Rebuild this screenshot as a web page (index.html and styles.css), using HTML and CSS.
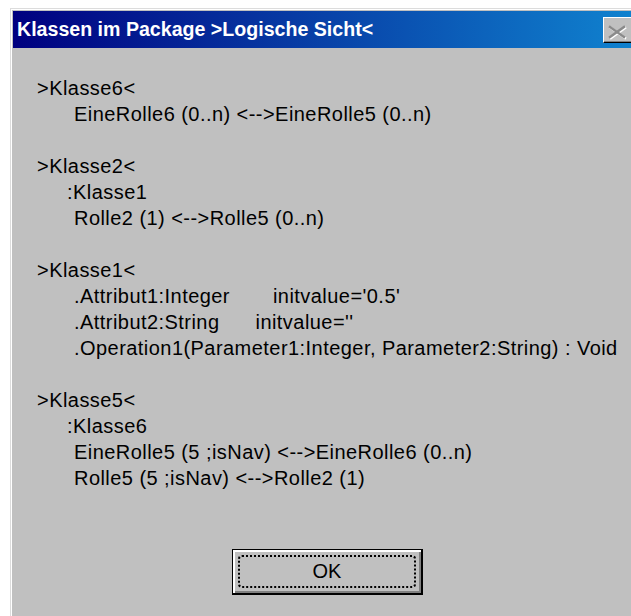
FILE: index.html
```html
<!DOCTYPE html>
<html lang="de">
<head>
<meta charset="utf-8">
<title>Klassen im Package</title>
<link rel="stylesheet" href="styles.css">
</head>
<body>
<div class="window">
  <div class="titlebar">
    <span class="title">Klassen im Package &gt;Logische Sicht&lt;</span>
    <span class="close" aria-label="Schließen">
      <svg width="30" height="24" viewBox="0 0 30 24">
        <g stroke-width="2.4" stroke-linecap="square">
          <path d="M6 9 L20 19 M20 9 L6 19" stroke="#ffffff" transform="translate(1 1)"/>
          <path d="M6 9 L20 19 M20 9 L6 19" stroke="#8a8a8a"/>
        </g>
      </svg>
    </span>
  </div>
  <div class="content">
    <div class="listing">
      <div class="block">
        <div class="line">&gt;Klasse6&lt;</div>
        <div class="line deep">EineRolle6 (0..n) &lt;--&gt;EineRolle5 (0..n)</div>
      </div>
      <div class="block">
        <div class="line">&gt;Klasse2&lt;</div>
        <div class="line shallow">:Klasse1</div>
        <div class="line deep">Rolle2 (1) &lt;--&gt;Rolle5 (0..n)</div>
      </div>
      <div class="block">
        <div class="line">&gt;Klasse1&lt;</div>
        <div class="line deep">.Attribut1:Integer<span class="init init-1">initvalue='0.5'</span></div>
        <div class="line deep">.Attribut2:String<span class="init init-2">initvalue=''</span></div>
        <div class="line deep">.Operation1(Parameter1:Integer, Parameter2:String) : Void</div>
      </div>
      <div class="block">
        <div class="line">&gt;Klasse5&lt;</div>
        <div class="line shallow">:Klasse6</div>
        <div class="line deep">EineRolle5 (5 ;isNav) &lt;--&gt;EineRolle6 (0..n)</div>
        <div class="line deep">Rolle5 (5 ;isNav) &lt;--&gt;Rolle2 (1)</div>
      </div>
    </div>
    <button class="ok" type="button"><span class="focus">OK</span></button>
  </div>
</div>
</body>
</html>
```
FILE: styles.css
```css
html, body {
  margin: 0;
  padding: 0;
}

body {
  width: 631px;
  height: 616px;
  overflow: hidden;
  background: #ffffff;
}

/* dialog frame, running on past the right and bottom edges */
.window {
  margin: 8px 0 0 10px;
  width: 629px;
  padding: 2px 2px 0 2px;
  border: 1px solid #dcdcdc;
  border-bottom: none;
  box-shadow: inset 1px 1px 0 #ffffff;
  background: #c0c0c0;
}

.titlebar {
  height: 37px;
  display: flex;
  align-items: center;
  justify-content: space-between;
  padding-left: 4px;
  background: linear-gradient(90deg, #000080 0%, #1084d0 100%);
}

.title {
  color: #ffffff;
  font-family: "Liberation Sans", Arial, sans-serif;
  font-weight: bold;
  font-size: 19.6px;
  white-space: nowrap;
}

.close {
  width: 30px;
  height: 24px;
  margin-right: 7px;
  background: #c0c0c0;
  border: 1px solid;
  border-color: #ffffff #000000 #000000 #ffffff;
  box-shadow: inset -1px -1px 0 #808080;
  display: flex;
}

.close svg {
  display: block;
}

/* message area */
.content {
  box-sizing: border-box;
  height: 568px;
  padding: 27px 0 0 24px;
  display: flex;
  flex-direction: column;
}

.listing {
  font-family: "Liberation Sans", Arial, sans-serif;
  font-size: 20px;
  letter-spacing: 0.45px;
  line-height: 26px;
  color: #000000;
}

.block + .block {
  margin-top: 26px;
}

.line {
  white-space: nowrap;
}

.shallow {
  padding-left: 30px;
}

.deep {
  padding-left: 37px;
}

.init-1 {
  margin-left: 43px;
}

.init-2 {
  margin-left: 36px;
}

/* default push button */
.ok {
  align-self: center;
  margin: 58px 0 0 -24px;
  width: 191px;
  height: 46px;
  padding: 5px;
  background: #c0c0c0;
  border: 1px solid #000000;
  border-right-width: 2px;
  border-bottom-width: 2px;
  box-shadow: inset 2px 2px 0 #ffffff, inset -2px -2px 0 #808080;
  display: flex;
}

.focus {
  flex: 1;
  border: 2px dotted #000000;
  border-radius: 4px;
  display: flex;
  align-items: center;
  justify-content: center;
  font-family: "Liberation Sans", Arial, sans-serif;
  font-size: 20px;
  color: #000000;
}
```
